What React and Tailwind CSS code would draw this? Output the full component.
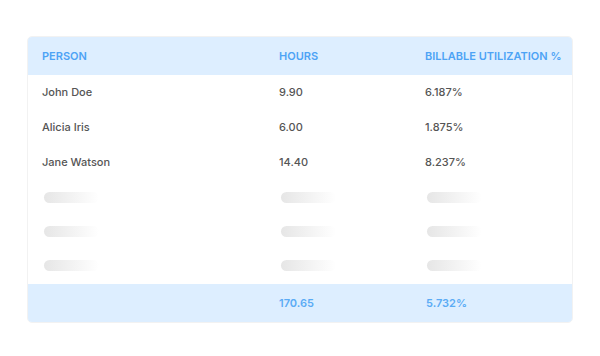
import React from 'react';

const cols = 'grid grid-cols-[237px_146px_1fr] items-center pl-[14px]';

const people = [
  { name: 'John Doe', hours: '9.90', util: '6.187%' },
  { name: 'Alicia Iris', hours: '6.00', util: '1.875%' },
  { name: 'Jane Watson', hours: '14.40', util: '8.237%' },
];

// placeholder bar shown while rows are still loading
function Skeleton() {
  return <div className="h-[11px] w-[55px] rounded-full bg-gradient-to-r from-[#e6e6e6] to-white" />;
}

export default function App() {
  return (
    <div className="w-[600px] h-[356px] bg-white pt-[36px] px-[27px] font-['Inter','Liberation_Sans',sans-serif]">
      <div className="rounded-[5px] border border-[#f2f2f2] overflow-hidden">
        <div className={`${cols} h-[38px] bg-[#ddeeff] text-[11px] font-semibold text-[#4da3f5]`}>
          <div>PERSON</div>
          <div>HOURS</div>
          <div>BILLABLE UTILIZATION %</div>
        </div>

        {people.map(p => (
          <div key={p.name} className={`${cols} h-[35px] text-[11px] font-medium text-[#555]`}>
            <div>{p.name}</div>
            <div>{p.hours}</div>
            <div>{p.util}</div>
          </div>
        ))}

        {[0, 1, 2].map(i => (
          <div key={i} className="grid grid-cols-[237px_146px_1fr] items-center pl-[16px] h-[34px]">
            <Skeleton />
            <Skeleton />
            <Skeleton />
          </div>
        ))}

        <div className={`${cols} h-[38px] mt-[2px] bg-[#ddeeff] text-[11px] font-semibold text-[#5aabf5]`}>
          <div />
          <div>170.65</div>
          <div className="pl-[1px]">5.732%</div>
        </div>
      </div>
    </div>
  );
}
